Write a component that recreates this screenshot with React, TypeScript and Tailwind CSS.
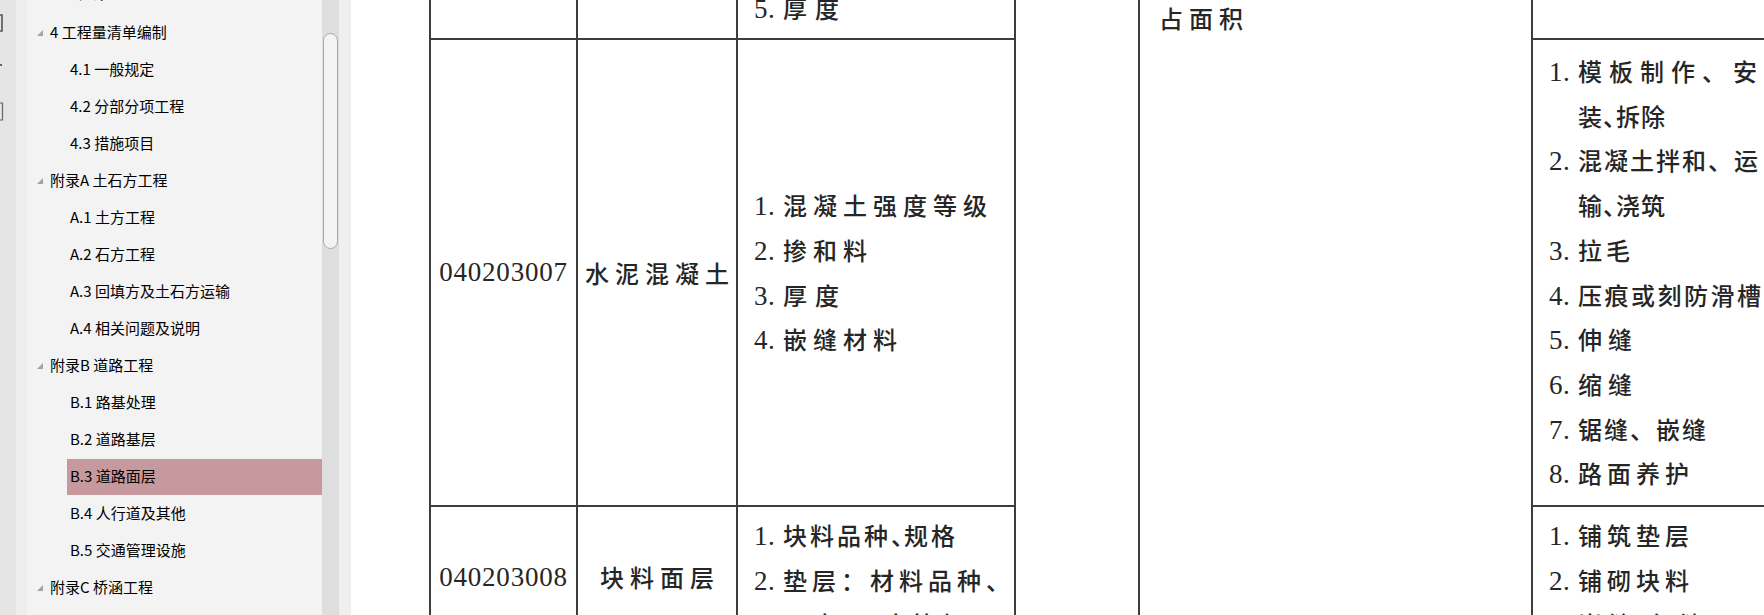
import React from "react";

type Item = { t: string; lvl: 1 | 2; sel?: boolean };

const items: Item[] = [
  { t: "3 工程计量", lvl: 1 },
  { t: "4 工程量清单编制", lvl: 1 },
  { t: "4.1 一般规定", lvl: 2 },
  { t: "4.2 分部分项工程", lvl: 2 },
  { t: "4.3 措施项目", lvl: 2 },
  { t: "附录A 土石方工程", lvl: 1 },
  { t: "A.1 土方工程", lvl: 2 },
  { t: "A.2 石方工程", lvl: 2 },
  { t: "A.3 回填方及土石方运输", lvl: 2 },
  { t: "A.4 相关问题及说明", lvl: 2 },
  { t: "附录B 道路工程", lvl: 1 },
  { t: "B.1 路基处理", lvl: 2 },
  { t: "B.2 道路基层", lvl: 2 },
  { t: "B.3 道路面层", lvl: 2, sel: true },
  { t: "B.4 人行道及其他", lvl: 2 },
  { t: "B.5 交通管理设施", lvl: 2 },
  { t: "附录C 桥涵工程", lvl: 1 },
  { t: "C.1 桩基", lvl: 2 },
];

function Tri() {
  return (
    <svg width="6" height="6" viewBox="0 0 6 6" className="shrink-0">
      <polygon points="6,0 6,6 0,6" fill="#a3a3a3" />
    </svg>
  );
}

function TreeRow({ it, first }: { it: Item; first?: boolean }) {
  if (it.lvl === 1) {
    return (
      <div
        className={
          first
            ? "flex items-center h-[37px] pl-[10px] gap-[7px] pb-[5px]"
            : "flex items-center h-[37px] pl-[10px] gap-[7px]"
        }
      >
        <Tri />
        <span className="text-[15px] text-[#000]">{it.t}</span>
      </div>
    );
  }
  return (
    <div className="flex items-center h-[37px] pl-[40px]">
      <div
        className={
          it.sel
            ? "flex items-center h-[36px] w-full pl-[3px] bg-[#c5999d]"
            : "flex items-center h-[36px] w-full pl-[3px]"
        }
      >
        <span className="text-[15px] text-[#000]">{it.t}</span>
      </div>
    </div>
  );
}

function L({
  n,
  children,
  tr = "tracking-[6px]",
}: {
  n?: string;
  children: React.ReactNode;
  tr?: string;
}) {
  return (
    <div className="flex items-baseline h-[44.7px] leading-[44.7px] whitespace-nowrap">
      <span className="inline-block w-[29px] shrink-0 font-['Liberation_Serif',serif] text-[27px] tracking-[0.5px]">
        {n}
      </span>
      <span className={"text-[24px] font-medium " + tr}>{children}</span>
    </div>
  );
}

function D() {
  return <span className="tracking-[-11px]">、</span>;
}

const cell = "border-r-2 border-[#3d3d3d]";
const cellB = "border-r-2 border-b-2 border-[#3d3d3d]";

export default function App() {
  return (
    <div className="flex w-[1764px] h-[615px] overflow-hidden bg-white font-['Noto_Sans_CJK_SC',sans-serif]">
      {/* left strip */}
      <div className="w-[16px] shrink-0 bg-[#e5e5e5] relative">
        <svg width="16" height="615" viewBox="0 0 16 615" className="absolute left-0 top-0">
          <path d="M0 15 H2 V31 H0" fill="none" stroke="#555" strokeWidth="1.6" />
          <rect x="0" y="64" width="2" height="2" fill="#666" />
          <path d="M0 103 H2.5 V120 H0" fill="none" stroke="#666" strokeWidth="1.2" />
        </svg>
      </div>
      <div className="w-[11px] shrink-0 bg-[#ededed]" />
      {/* tree panel */}
      <div className="w-[295px] shrink-0 bg-[#f3f3f3] overflow-hidden">
        <div className="mt-[-23px] flex flex-col">
          {items.map((it, i) => (
            <TreeRow key={i} it={it} first={i === 0} />
          ))}
        </div>
      </div>
      {/* scrollbar */}
      <div className="w-[17px] shrink-0 bg-[#dedede] px-[1px]">
        <div className="mt-[33px] h-[216px] rounded-full border border-[#a9a9a9] bg-[#f3f3f3]" />
      </div>
      <div className="w-[12px] shrink-0 bg-[#efefef]" />
      {/* document */}
      <div className="flex-1 bg-white overflow-hidden text-[#262626]">
        <div className="ml-[78px] w-[1500px] border-l-2 border-[#3d3d3d] grid grid-cols-[147px_160px_278px_124px_393px_398px] grid-rows-[40px_467px_150px]">
          {/* row 0 */}
          <div className={cellB} />
          <div className={cellB} />
          <div className={cellB + " pl-[16px]"}>
            <div className="mt-[-14px]">
              <L n="5." tr="tracking-[8px]">厚度</L>
            </div>
          </div>
          <div className={cell + " row-span-3"} />
          <div className={cell + " row-span-3 pl-[19px]"}>
            <div className="mt-[-4px] leading-[44.7px] text-[24px] font-medium tracking-[6px]">占面积</div>
          </div>
          <div className={cellB} />

          {/* row 1 */}
          <div className={cellB + " flex items-center justify-center"}>
            <span className="font-['Liberation_Serif',serif] text-[27px] tracking-[0.8px]">040203007</span>
          </div>
          <div className={cellB + " flex items-center justify-center"}>
            <span className="text-[24px] font-medium tracking-[6px] ml-[6px]">水泥混凝土</span>
          </div>
          <div className={cellB + " flex flex-col justify-center pl-[16px]"}>
            <L n="1.">混凝土强度等级</L>
            <L n="2.">掺和料</L>
            <L n="3." tr="tracking-[8px]">厚度</L>
            <L n="4.">嵌缝材料</L>
          </div>
          <div className={cellB + " flex flex-col justify-center pl-[16px]"}>
            <L n="1." tr="tracking-[7px]">模板制作、安</L>
            <L tr="tracking-[1px]">装<D />拆除</L>
            <L n="2." tr="tracking-[2px]">混凝土拌和、运</L>
            <L tr="tracking-[1px]">输<D />浇筑</L>
            <L n="3." tr="tracking-[4px]">拉毛</L>
            <L n="4." tr="tracking-[2.5px]">压痕或刻防滑槽</L>
            <L n="5.">伸缝</L>
            <L n="6.">缩缝</L>
            <L n="7." tr="tracking-[2px]">锯缝、嵌缝</L>
            <L n="8." tr="tracking-[5px]">路面养护</L>
          </div>

          {/* row 2 */}
          <div className={cell + " flex justify-center pt-[48px]"}>
            <span className="font-['Liberation_Serif',serif] text-[27px] tracking-[0.8px] leading-[44.7px]">040203008</span>
          </div>
          <div className={cell + " flex justify-center pt-[48px]"}>
            <span className="text-[24px] font-medium tracking-[6px] ml-[6px] leading-[44.7px]">块料面层</span>
          </div>
          <div className={cell + " flex flex-col pt-[6px] pl-[16px]"}>
            <L n="1." tr="tracking-[3px]">块料品种<D />规格</L>
            <L n="2." tr="tracking-[5px]">垫层：材料品种、</L>
            <L tr="tracking-[5px]">厚度<D />强度等级</L>
          </div>
          <div className={cell + " flex flex-col pt-[6px] pl-[16px]"}>
            <L n="1." tr="tracking-[5px]">铺筑垫层</L>
            <L n="2." tr="tracking-[5px]">铺砌块料</L>
            <L n="3." tr="tracking-[5px]">嵌缝<D />勾缝</L>
          </div>
        </div>
      </div>
    </div>
  );
}
